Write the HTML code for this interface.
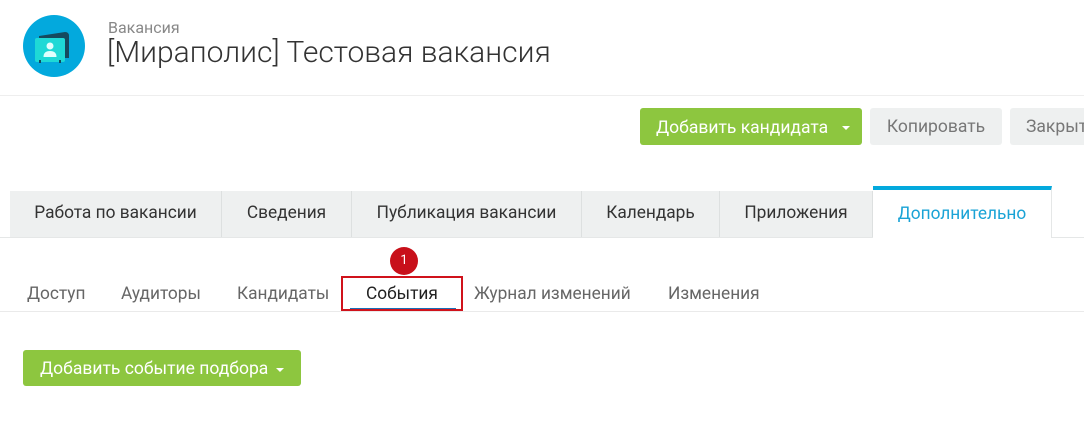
<!DOCTYPE html>
<html><head><meta charset="utf-8"><style>
body{margin:0;width:1084px;height:448px;background:#fff;font-family:Roboto,"Liberation Sans",sans-serif;position:relative;overflow:hidden}
.a{position:absolute;white-space:nowrap}
.tab{position:absolute;top:191px;height:47px;line-height:45px;text-align:center;font-size:17.3px;color:#333;background:#eef0f0;border-right:1px solid #dde0e0;box-sizing:border-box}
.sub{position:absolute;top:284px;font-size:17.3px;color:#666}
</style></head><body>
<div class="a" style="left:23px;top:15px;width:62px;height:62px;border-radius:50%;background:#03a9dd"></div>
<svg class="a" style="left:23px;top:15px" width="62" height="62">
<path d="M16 21 L42 17 Q46 17 46 21 L46 43 L16 43Z" fill="#154a5e"/>
<rect x="12" y="23" width="30" height="24" rx="2" fill="#1ed9d6"/>
<circle cx="27" cy="31" r="3.5" fill="#e0fffe"/>
<path d="M20.5 42 Q20.5 36 27 36 Q33.5 36 33.5 42Z" fill="#e0fffe"/>
<rect x="16" y="45" width="2" height="3" fill="#154a5e"/><rect x="36" y="45" width="2" height="3" fill="#154a5e"/>
</svg>
<div class="a" style="left:108px;top:18px;font-size:16px;color:#888">Вакансия</div>
<div class="a" style="left:107px;top:35px;font-size:30px;font-weight:300;color:#333">[Мираполис] Тестовая вакансия</div>
<div class="a" style="left:0;top:95px;width:1084px;height:1px;background:#eee"></div>

<div class="a" style="left:640px;top:108px;width:222px;height:37px;background:#8dc63f;border-radius:3px;color:#fff;font-size:17.5px;line-height:40px;"><span style="margin-left:16px">Добавить кандидата</span><span style="position:absolute;left:202px;top:18px;border:4px solid transparent;border-top-color:#fff;border-bottom:0"></span></div>
<div class="a" style="left:870px;top:108px;width:132px;height:37px;background:#eef0f0;border-radius:3px;color:#777;font-size:17.5px;line-height:38px;text-align:center">Копировать</div>
<div class="a" style="left:1010px;top:108px;width:90px;height:37px;background:#eef0f0;border-radius:3px;color:#777;font-size:17.5px;line-height:38px;padding-left:16px;box-sizing:border-box">Закрыть</div>

<div class="tab" style="left:10px;width:212px">Работа по вакансии</div>
<div class="tab" style="left:222px;width:130px">Сведения</div>
<div class="tab" style="left:352px;width:230px">Публикация вакансии</div>
<div class="tab" style="left:582px;width:138px">Календарь</div>
<div class="tab" style="left:720px;width:153px">Приложения</div>
<div class="a" style="left:0;top:237px;width:1084px;height:1px;background:#e5e7e7"></div>
<div class="tab" style="left:873px;width:179px;top:186px;height:52px;background:#fff;border-top:4px solid #03a9dd;border-right:1px solid #e5e7e7;color:#1aa3d6;line-height:48px">Дополнительно</div>

<div class="sub" style="left:27px">Доступ</div>
<div class="sub" style="left:121px">Аудиторы</div>
<div class="sub" style="left:237px">Кандидаты</div>
<div class="sub" style="left:366px;color:#222">События</div>
<div class="sub" style="left:474px">Журнал изменений</div>
<div class="sub" style="left:668px">Изменения</div>
<div class="a" style="left:0;top:311px;width:1084px;height:1px;background:#eaeaea"></div>
<div class="a" style="left:350px;top:308px;width:106px;height:3px;background:#1a6fb7"></div>
<div class="a" style="left:341px;top:276px;width:122px;height:35px;border:2px solid #d0121b;box-sizing:border-box"></div>
<div class="a" style="left:390px;top:247px;width:28px;height:28px;border-radius:50%;background:#c8101a;color:#fff;font-size:13px;line-height:28px;text-align:center">1</div>

<div class="a" style="left:23px;top:350px;width:278px;height:36px;background:#8dc63f;border-radius:3px;color:#fff;font-size:17.5px;line-height:39px"><span style="margin-left:17px">Добавить событие подбора</span><span style="position:absolute;left:253px;top:18px;border:4px solid transparent;border-top-color:#fff;border-bottom:0"></span></div>
</body></html>
